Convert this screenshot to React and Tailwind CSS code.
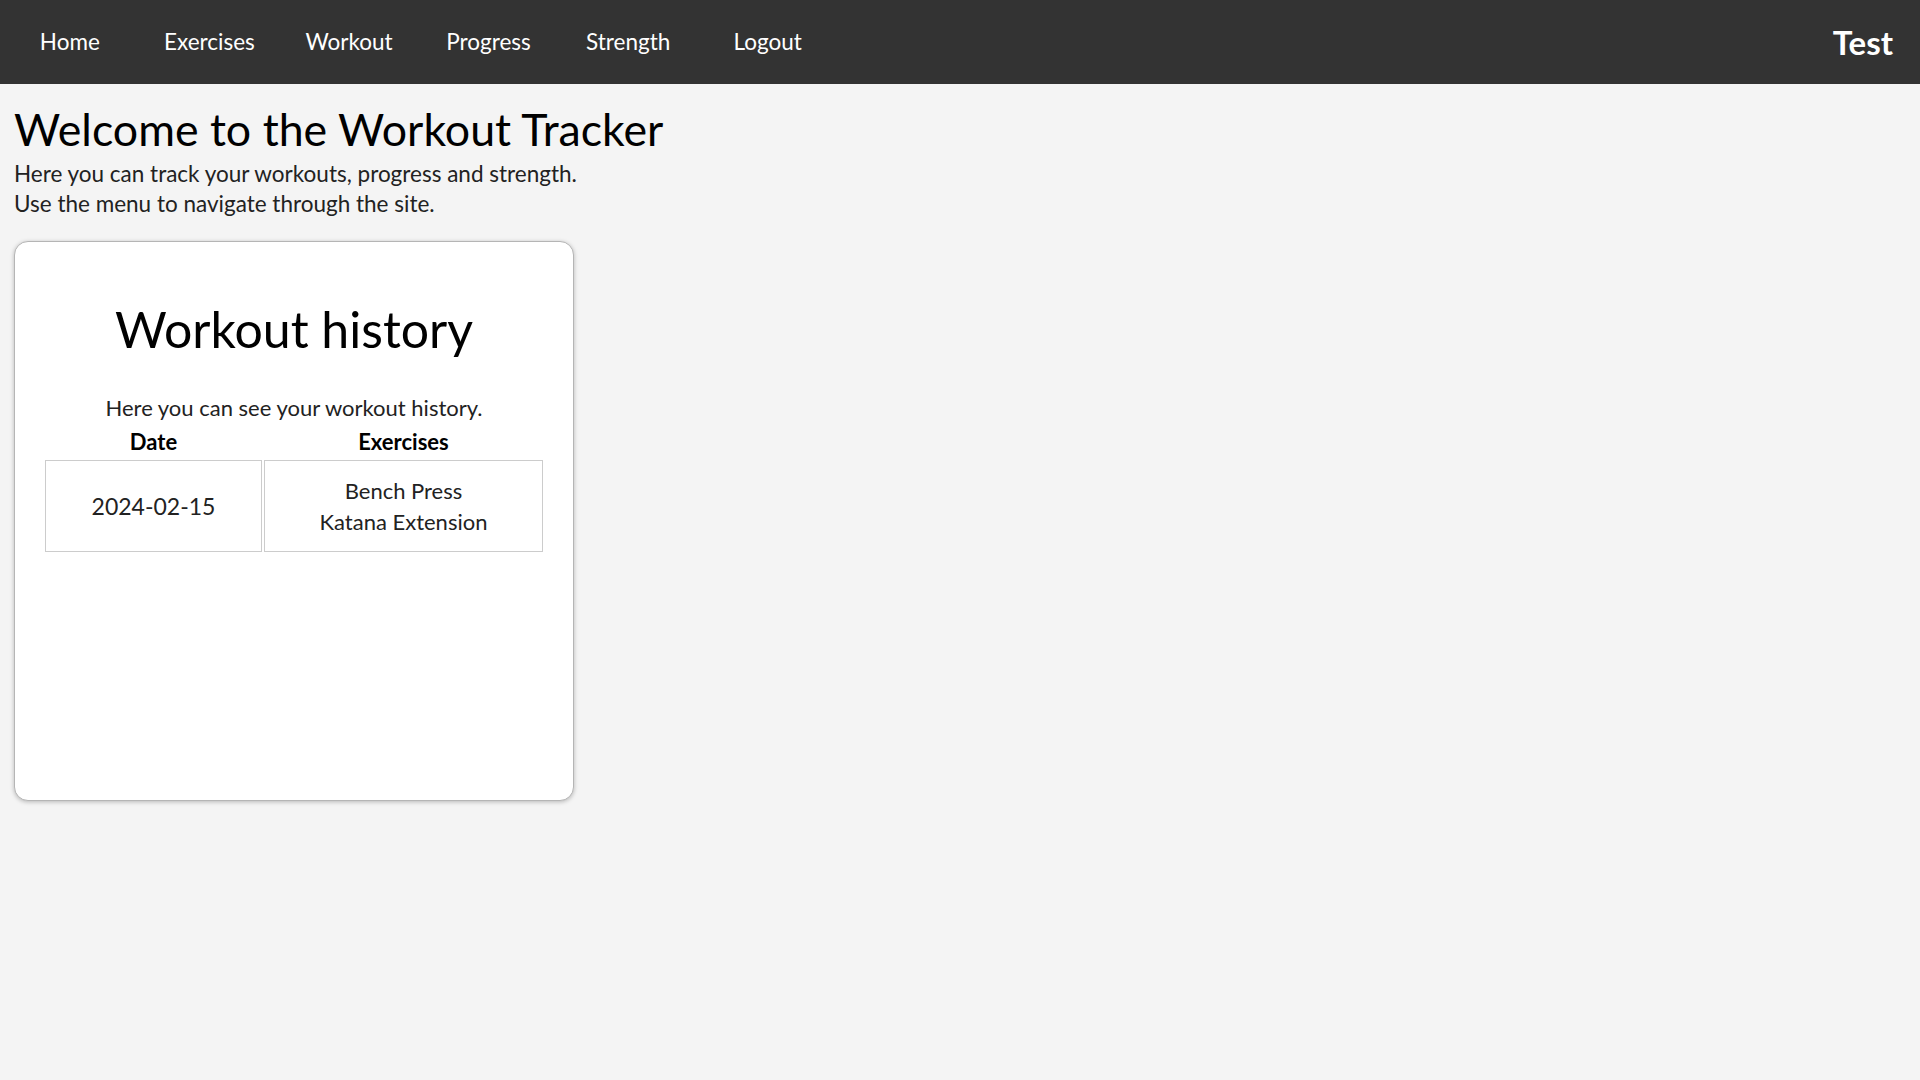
const links = ['Home', 'Exercises', 'Workout', 'Progress', 'Strength', 'Logout'];

const Navbar = () => {
  return (
    <nav className="h-[84px] bg-[#333333] flex items-center justify-between pr-[27px]">
      <ul className="flex items-center">
        {links.map((item) => (
          <li key={item} className="w-[139.6px] text-center text-[22.5px] text-white -mt-[1px]">
            <a href="#">{item}</a>
          </li>
        ))}
      </ul>
      <span className="text-[33px] font-bold text-white leading-none">Test</span>
    </nav>
  );
};

const History = () => {
  return (
    <div className="w-[560px] h-[560px] bg-white rounded-[14px] border border-[#b5b5b5] shadow-[0_1px_4px_rgba(0,0,0,0.25)] flex flex-col items-center">
      <h2 className="mt-[57px] text-[50px] leading-[60px] text-black">Workout history</h2>
      <p className="mt-[34px] text-[22px] leading-[30px] text-[#222]">Here you can see your workout history.</p>
      <table className="border-separate border-spacing-[2px] text-[22px] text-[#222]">
        <thead>
          <tr>
            <th className="w-[217px] h-[32px] font-bold text-black">Date</th>
            <th className="w-[279px] h-[32px] font-bold text-black">Exercises</th>
          </tr>
        </thead>
        <tbody>
          <tr>
            <td className="h-[92px] border border-[#cccccc] text-center text-[23px]">2024-02-15</td>
            <td className="h-[92px] border border-[#cccccc] text-center leading-[31px]">
              Bench Press
              <br />
              Katana Extension
            </td>
          </tr>
        </tbody>
      </table>
    </div>
  );
};

export default function App() {
  return (
    <div className="min-h-screen bg-[#f4f4f4] font-['Lato',sans-serif]">
      <Navbar />
      <main className="px-[14px]">
        <h1 className="mt-[17px] text-[44.7px] leading-[56px] text-black">Welcome to the Workout Tracker</h1>
        <p className="mt-[2px] text-[22.5px] leading-[30px] text-[#222]">
          Here you can track your workouts, progress and strength.
          <br />
          Use the menu to navigate through the site.
        </p>
        <div className="mt-[22px]">
          <History />
        </div>
      </main>
    </div>
  );
}
